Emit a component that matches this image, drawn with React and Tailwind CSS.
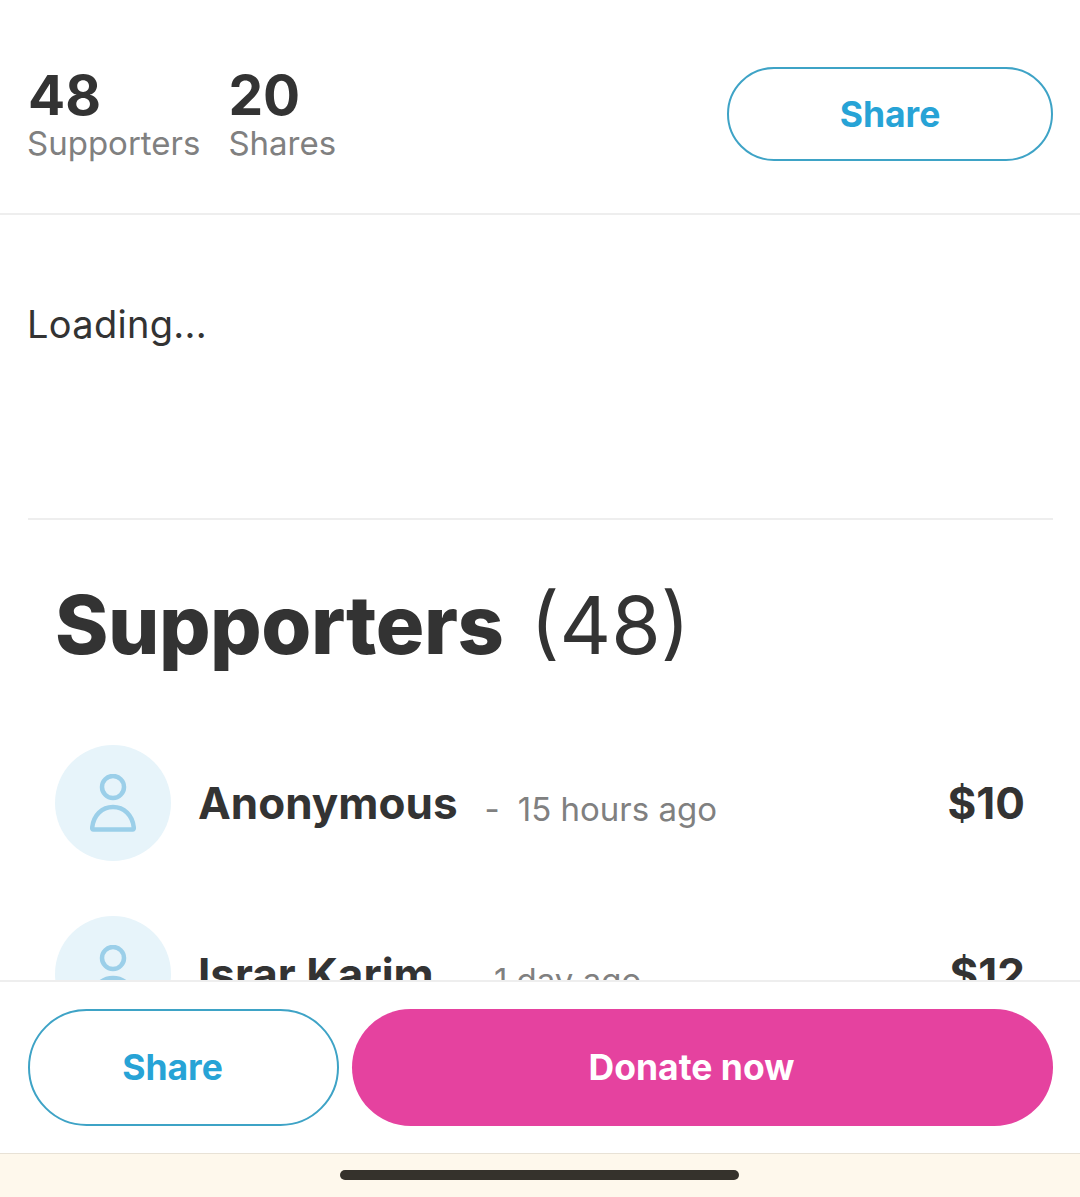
function PersonIcon() {
  return (
    <svg width="46" height="58" viewBox="0 0 46 58" fill="none" stroke="#9bcfe9" strokeWidth="4.5">
      <circle cx="23" cy="13" r="11" />
      <path d="M3.5 55.5 H42.5 Q44 55.5 43.8 53.5 C42.5 41 34 33 23 33 C12 33 3.5 41 2.2 53.5 Q2 55.5 3.5 55.5 Z" strokeLinejoin="round" />
    </svg>
  );
}

function Supporter({ name, time, amount }) {
  return (
    <div className="flex items-center h-[116px] shrink-0">
      <div className="w-[116px] h-[116px] rounded-full bg-[#e7f4fa] flex items-center justify-center shrink-0">
        <PersonIcon />
      </div>
      <div className="ml-[27px] text-[44px] leading-[56px] font-bold text-[#333333]">{name}</div>
      <div className="ml-[27px] mt-[12px] text-[33px] leading-[44px] text-[#808080]">-</div>
      <div className="ml-[18px] mt-[12px] text-[33px] leading-[44px] text-[#808080]">{time}</div>
      <div className="ml-auto text-[44px] leading-[56px] font-bold text-[#333333]">{amount}</div>
    </div>
  );
}

export default function App() {
  return (
    <div className="w-[1080px] h-[1197px] bg-white flex flex-col overflow-hidden font-['Inter',sans-serif] antialiased">
      <div className="flex-1 min-h-0 overflow-hidden">
        <div className="flex items-start justify-between h-[215px] border-b-2 border-[#eeeeee] pl-[28px] pr-[27px] pt-[67px]">
          <div className="flex gap-[28px]">
            <div>
              <div className="text-[55px] leading-[56px] font-bold text-[#333333]">48</div>
              <div className="-ml-px text-[33px] leading-[40px] text-[#808080]">Supporters</div>
            </div>
            <div>
              <div className="text-[55px] leading-[56px] font-bold text-[#333333]">20</div>
              <div className="text-[33px] leading-[40px] text-[#808080]">Shares</div>
            </div>
          </div>
          <button className="w-[326px] h-[94px] pt-[2px] rounded-full border-2 border-[#3ea3c6] bg-white text-[35.5px] font-bold text-[#27a3d6]">Share</button>
        </div>
        <div className="ml-[28px] mr-[27px] pt-[84px] h-[305px] border-b-2 border-[#eeeeee]">
          <div className="-ml-px text-[38px] leading-[50px] tracking-[0.3px] text-[#333333]">Loading...</div>
        </div>
        <div className="flex items-baseline pl-[55px] pt-[57px] h-[225px]">
          <span className="text-[81px] leading-[96px] font-extrabold tracking-[-0.5px] text-[#333333]">Supporters</span>
          <span className="ml-[27px] text-[80px] leading-[96px] font-normal text-[#333333]">(48)</span>
        </div>
        <div className="flex flex-col gap-[55px] pl-[55px] pr-[55px]">
          <Supporter name="Anonymous" time="15 hours ago" amount="$10" />
          <Supporter name="Israr Karim" time="1 day ago" amount="$12" />
        </div>
      </div>
      <div className="h-[173px] shrink-0 bg-white border-t-2 border-[#eeeeee] flex items-start gap-[13px] pl-[28px] pr-[27px] pt-[27px]">
        <button className="w-[311px] h-[117px] rounded-full border-2 border-[#3ea3c6] bg-white text-[35.5px] font-bold text-[#27a3d6] pr-[22px]">Share</button>
        <button className="flex-1 h-[117px] rounded-full bg-[#e5429f] text-[35.5px] font-bold text-white pr-[22px]">Donate now</button>
      </div>
      <div className="h-[44px] shrink-0 bg-[#fef8ec] border-t border-[#e8e2d6] flex justify-center pt-[16px]">
        <div className="w-[399px] h-[10px] rounded-full bg-[#35322c] mr-[1px]" />
      </div>
    </div>
  );
}
